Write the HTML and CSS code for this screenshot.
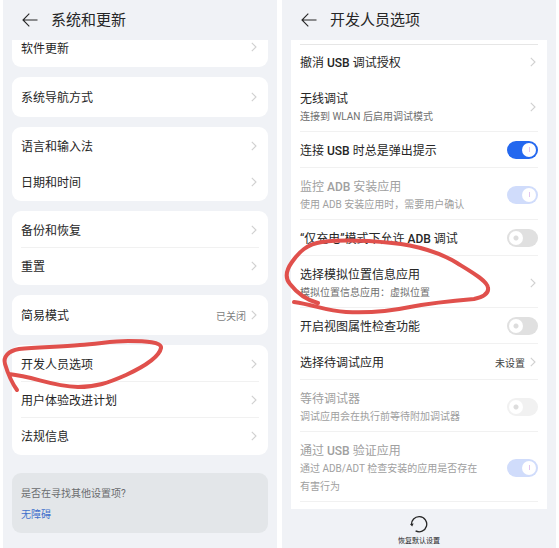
FILE: index.html
```html
<!DOCTYPE html>
<html lang="zh-CN">
  <head>
    <meta charset="UTF-8">
    <meta name="viewport" content="width=device-width, initial-scale=1">
    <title>系统和更新</title>
    <link rel="stylesheet" href="styles.css">
  </head>
  <body>
    <svg class="defs" aria-hidden="true">
      <symbol id="back" viewBox="0 0 16 14">
        <path d="M15.5 7H1M7.3 .7L1 7l6.3 6.3" fill="none" stroke="currentColor" stroke-width="1.1" />
      </symbol>
      <symbol id="chevron" viewBox="0 0 6 10">
        <path d="M.8 .8L5 5 .8 9.2" fill="none" stroke="currentColor" stroke-width="1.1" />
      </symbol>
    </svg>
    <main class="screens">
      <section class="panel">
        <header class="bar">
          <button class="back" aria-label="返回"><svg><use href="#back" /></svg></button>
          <h1>系统和更新</h1>
        </header>
        <div class="cards">
          <div class="card card-cut">
            <a class="row" href="#update"><span class="name">软件更新</span><svg class="chevron"><use href="#chevron" /></svg></a>
          </div>
          <div class="card card-single">
            <a class="row" href="#nav"><span class="name">系统导航方式</span><svg class="chevron"><use href="#chevron" /></svg></a>
          </div>
          <div class="card">
            <a class="row row-plain" href="#language"><span class="name">语言和输入法</span><svg class="chevron"><use href="#chevron" /></svg></a>
            <a class="row" href="#date"><span class="name">日期和时间</span><svg class="chevron"><use href="#chevron" /></svg></a>
          </div>
          <div class="card">
            <a class="row" href="#backup"><span class="name">备份和恢复</span><svg class="chevron"><use href="#chevron" /></svg></a>
            <a class="row" href="#reset"><span class="name">重置</span><svg class="chevron"><use href="#chevron" /></svg></a>
          </div>
          <div class="card card-single">
            <a class="row" href="#simple"><span class="name">简易模式</span><span class="value">已关闭</span><svg class="chevron"><use href="#chevron" /></svg></a>
          </div>
          <div class="card">
            <a class="row" href="#developer">
              <span class="name">开发人员选项</span><svg class="chevron"><use href="#chevron" /></svg>
              <svg class="mark mark-developer" viewBox="0 336 170 60" aria-hidden="true">
                <path d="M17 390C12 383 8 374 5 364C3 357 8 351 19 349C38 347 60 347 80 345C98 344 112 341 128 341C146 341 162 342 161 348C159 358 141 368 126 375C108 383 96 387 78 387C50 386 36 377 9 374" />
              </svg>
            </a>
            <a class="row" href="#experience"><span class="name">用户体验改进计划</span><svg class="chevron"><use href="#chevron" /></svg></a>
            <a class="row" href="#legal"><span class="name">法规信息</span><svg class="chevron"><use href="#chevron" /></svg></a>
          </div>
          <div class="hint">
            <p>是否在寻找其他设置项?</p>
            <a href="#accessibility">无障碍</a>
          </div>
        </div>
      </section>

      <section class="panel">
        <header class="bar">
          <button class="back" aria-label="返回"><svg><use href="#back" /></svg></button>
          <h1>开发人员选项</h1>
        </header>
        <div class="options">
          <a class="row row-plain" href="#revoke"><span class="name">撤消 <b>USB</b> 调试授权</span><svg class="chevron"><use href="#chevron" /></svg></a>
          <a class="row row-tall" href="#wireless">
            <span class="name">无线调试<small>连接到 WLAN 后启用调试模式</small></span><svg class="chevron"><use href="#chevron" /></svg>
          </a>
          <label class="row"><span class="name">连接 <b>USB</b> 时总是弹出提示</span><input type="checkbox" class="switch" checked></label>
          <label class="row row-tall row-disabled">
            <span class="name">监控 <b>ADB</b> 安装应用<small>使用 ADB 安装应用时，需要用户确认</small></span><input type="checkbox" class="switch" checked disabled>
          </label>
          <label class="row"><span class="name">“仅充电”模式下允许 <b>ADB</b> 调试</span><input type="checkbox" class="switch"></label>
          <a class="row row-tall" href="#mock">
            <span class="name">选择模拟位置信息应用<small>模拟位置信息应用：虚拟位置</small></span><svg class="chevron"><use href="#chevron" /></svg>
            <svg class="mark mark-mock" viewBox="280 236 216 82" aria-hidden="true">
              <path d="M318 303C306 300 297 293 290 284C284 277 287 269 292 262C299 252 307 244 322 242C346 239 372 241 392 243C416 245 441 253 457 263C470 271 488 281 488 288C489 294 483 297 474 299C450 301 431 303 410 307C391 311 366 313 346 312C326 311 315 305 294 302" />
            </svg>
          </a>
          <label class="row"><span class="name">开启视图属性检查功能</span><input type="checkbox" class="switch"></label>
          <a class="row" href="#debug-app"><span class="name">选择待调试应用</span><span class="value value-dark">未设置</span><svg class="chevron"><use href="#chevron" /></svg></a>
          <label class="row row-tall row-disabled">
            <span class="name">等待调试器<small>调试应用会在执行前等待附加调试器</small></span><input type="checkbox" class="switch" disabled>
          </label>
          <label class="row row-tall row-disabled">
            <span class="name">通过 <b>USB</b> 验证应用<small>通过 ADB/ADT 检查安装的应用是否存在有害行为</small></span><input type="checkbox" class="switch" checked disabled>
          </label>
        </div>
        <button class="restore">
          <svg viewBox="0 0 18 18" aria-hidden="true">
            <path d="M1.6 10.2A7.6 7.6 0 1 1 5.6 15.9" fill="none" stroke="currentColor" stroke-width="1.3" />
            <path d="M0 9l3.6-.4-1.4 3z" fill="currentColor" />
          </svg>
          恢复默认设置
        </button>
      </section>
    </main>
  </body>
</html>
```
FILE: styles.css
```css
* {
  box-sizing: border-box;
}
body {
  background: white;
  color: #262626;
  font-family: Roboto, "Noto Sans CJK SC", sans-serif;
  font-size: 12px;
  margin: 0;
}
a {
  color: inherit;
  text-decoration: none;
}
b {
  font-weight: 500;
}
button {
  background: none;
  border: 0;
  color: inherit;
  font-family: inherit;
  padding: 0;
}
h1 {
  font-size: 15px;
  font-weight: 400;
  margin: 0;
}
.defs {
  display: none;
}
.screens {
  display: grid;
  gap: 5px;
  grid-template-columns: 1fr 1fr;
  min-height: 100vh;
  padding: 0 3px;
}
.panel {
  background: #f0f2f6;
  display: flex;
  flex-direction: column;
  padding: 0 9px;
}
.bar {
  align-items: center;
  display: flex;
  gap: 13px;
  height: 40px;
  line-height: 20px;
  padding: 0 10px;
}
.back,
.back svg {
  display: block;
  height: 14px;
  width: 16px;
}

.cards {
  display: flex;
  flex-direction: column;
  gap: 10px;
}
.card {
  background: white;
  border-radius: 9px;
  padding: 1px 9px;
}
.card-single {
  padding: 2px 9px;
}
.card-cut {
  border-radius: 0 0 9px 9px;
  padding: 0 9px;
}
.card-cut .row {
  height: 27px;
  padding-bottom: 12px;
}
.row {
  align-items: center;
  border-bottom: 1px solid #f1f1f1;
  display: flex;
  height: 36px;
  position: relative;
}
.row-plain,
.card .row:last-child {
  border-color: transparent;
}
.name {
  flex: 1;
  line-height: 18px;
  padding-top: 3px;
}
.value {
  color: #808080;
  font-size: 10px;
  margin-right: 5px;
  padding-top: 2px;
}
.value-dark {
  color: #444;
}
.chevron {
  color: #d0d0d0;
  height: 10px;
  margin-right: 2px;
  width: 6px;
}

.options {
  background: white;
  padding: 4px 9px 7px;
}
.options::before {
  background: #e6e6e6;
  content: "";
  display: block;
  height: 1px;
  margin-bottom: -1px;
}
.row-tall {
  height: auto;
  padding: 7px 0 5px;
}
.name small {
  color: #707070;
  display: block;
  font-size: 10px;
  line-height: 18px;
  max-width: 186px;
}
.row-disabled .name,
.row-disabled small {
  color: #a0a0a0;
}
.switch {
  appearance: none;
  background: #e0e0e0;
  border-radius: 9px;
  height: 18px;
  margin: 0;
  padding: 2px;
  width: 31px;
}
.switch::before {
  background: radial-gradient(circle, #ddd 2px, white 3px);
  border-radius: 50%;
  content: "";
  display: block;
  height: 14px;
  width: 14px;
}
.switch:checked {
  background: #2468ef;
}
.switch:checked::before {
  background: linear-gradient(#e3c4ef, #e3c4ef) center / 1px 5px no-repeat white;
  margin-left: auto;
}
.switch:disabled {
  background: #f1f1f1;
}
.switch:checked:disabled {
  background: #d0dcfb;
}

.hint {
  background: #e3e6e9;
  border-radius: 9px;
  color: #6a6c6e;
  font-size: 10px;
  line-height: 21px;
  margin-top: 8px;
  padding: 10px 9px 8px;
}
.hint p {
  margin: 0;
}
.hint a {
  color: #3f70cc;
}

.restore {
  align-items: center;
  align-self: center;
  display: flex;
  flex-direction: column;
  font-size: 7px;
  gap: 3px;
  line-height: 10px;
  margin-top: 6px;
}
.restore svg {
  height: 18px;
  width: 18px;
}

/* hand-drawn circles */
.mark {
  fill: none;
  pointer-events: none;
  position: absolute;
  stroke: #e0504c;
  stroke-linecap: round;
  stroke-linejoin: round;
  stroke-width: 4px;
  z-index: 1;
}
.mark-developer {
  height: 60px;
  left: -21px;
  top: -10px;
  width: 170px;
}
.mark-mock {
  height: 82px;
  left: -20px;
  top: -20px;
  width: 216px;
}
```
